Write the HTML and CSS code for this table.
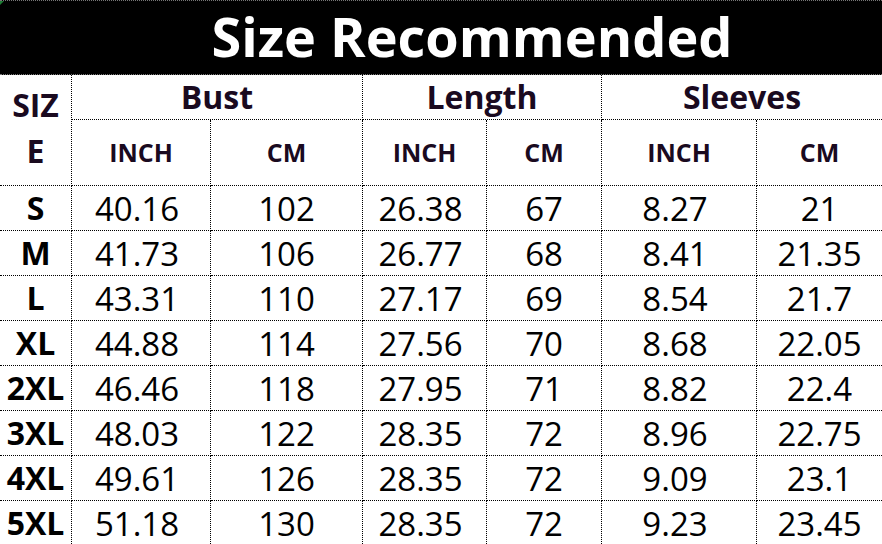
FILE: index.html
```html
<!DOCTYPE html>
<html lang="en">
<head>
<meta charset="utf-8">
<title>Size Recommended</title>
<link rel="stylesheet" href="styles.css">
</head>
<body>
<div class="sheet">
  <div class="title">Size Recommended<span class="marker"></span></div>
  <div class="cell size-head">SIZ E</div>
  <div class="cell group span2">Bust</div>
  <div class="cell group span2">Length</div>
  <div class="cell group span2 last">Sleeves</div>
  <div class="cell unit">INCH</div>
  <div class="cell unit">CM</div>
  <div class="cell unit">INCH</div>
  <div class="cell unit">CM</div>
  <div class="cell unit">INCH</div>
  <div class="cell unit last">CM</div>

  <div class="cell size">S</div><div class="cell num in">40.16</div><div class="cell num">102</div><div class="cell num in">26.38</div><div class="cell num">67</div><div class="cell num in">8.27</div><div class="cell num last">21</div>
  <div class="cell size">M</div><div class="cell num in">41.73</div><div class="cell num">106</div><div class="cell num in">26.77</div><div class="cell num">68</div><div class="cell num in">8.41</div><div class="cell num last">21.35</div>
  <div class="cell size">L</div><div class="cell num in">43.31</div><div class="cell num">110</div><div class="cell num in">27.17</div><div class="cell num">69</div><div class="cell num in">8.54</div><div class="cell num last">21.7</div>
  <div class="cell size">XL</div><div class="cell num in">44.88</div><div class="cell num">114</div><div class="cell num in">27.56</div><div class="cell num">70</div><div class="cell num in">8.68</div><div class="cell num last">22.05</div>
  <div class="cell size">2XL</div><div class="cell num in">46.46</div><div class="cell num">118</div><div class="cell num in">27.95</div><div class="cell num">71</div><div class="cell num in">8.82</div><div class="cell num last">22.4</div>
  <div class="cell size">3XL</div><div class="cell num in">48.03</div><div class="cell num">122</div><div class="cell num in">28.35</div><div class="cell num">72</div><div class="cell num in">8.96</div><div class="cell num last">22.75</div>
  <div class="cell size">4XL</div><div class="cell num in">49.61</div><div class="cell num">126</div><div class="cell num in">28.35</div><div class="cell num">72</div><div class="cell num in">9.09</div><div class="cell num last">23.1</div>
  <div class="cell size">5XL</div><div class="cell num in">51.18</div><div class="cell num">130</div><div class="cell num in">28.35</div><div class="cell num">72</div><div class="cell num in">9.23</div><div class="cell num last">23.45</div>
</div>
</body>
</html>
```
FILE: styles.css
```css
* { box-sizing: border-box; }
html, body { margin: 0; padding: 0; background: #fff; overflow: hidden; }
body { width: 882px; height: 544px; font-family: "Open Sans", "Noto Sans", sans-serif; }

.sheet {
  display: grid;
  grid-template-columns: 72px 139px 152px 124px 115px 155px 125px;
  grid-template-rows: 75px 45px 66px repeat(8, 45px);
}

.title {
  grid-column: 1 / -1;
  position: relative;
  background: #000;
  color: #fff;
  font-weight: 700;
  font-size: 54px;
  line-height: 1;
  display: flex;
  align-items: center;
  justify-content: center;
  padding-left: 62px;
  padding-bottom: 4px;
  border-top: 1px dotted #777;
  border-bottom: 1px dotted #777;
}
.marker {
  position: absolute;
  left: 0; top: 0;
  width: 0; height: 0;
  border-top: 4px solid #1e7b34;
  border-right: 4px solid transparent;
}

.cell {
  display: flex;
  align-items: center;
  justify-content: center;
  border-right: 1px dotted #000;
  border-bottom: 1px dotted #000;
  text-align: center;
  line-height: 1;
}
.cell.last { border-right: none; }
.span2 { grid-column: span 2; }

.size-head {
  grid-row: span 2;
  font-weight: 700;
  font-size: 32px;
  line-height: 46px;
  color: #1a0a1f;
  padding: 0 6px 4px;
  word-break: break-all;
}
.group {
  font-weight: 700;
  font-size: 32px;
  color: #1a0a1f;
  padding-bottom: 1px;
}
.unit {
  font-weight: 700;
  font-size: 25px;
  color: #1a0a1f;
}
.size {
  font-weight: 700;
  font-size: 32px;
  color: #000;
}
.num {
  font-size: 33px;
  color: #000;
}
.num.in { padding-right: 8px; }
```
